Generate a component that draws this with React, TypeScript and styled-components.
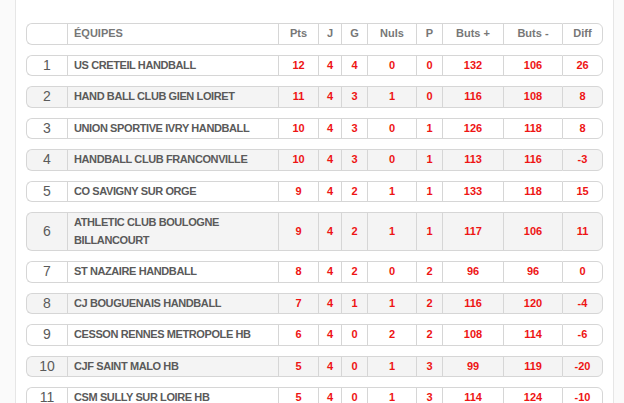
import React from "react";
import styled, { createGlobalStyle } from "styled-components";

const Global = createGlobalStyle`
  html, body { margin: 0; padding: 0; background: #fafafa; overflow: hidden; }
  body { font-family: "Liberation Sans", Arial, sans-serif; }
`;

const Panel = styled.div`
  margin-left: 15px;
  width: 577px;
  min-height: 403px;
  box-sizing: content-box;
  padding: 13px 10px 0 10px;
  background: #ffffff;
  border-left: 1px solid #e6e6e6;
  border-right: 1px solid #e6e6e6;
`;

const Table = styled.table`
  width: 577px;
  border-collapse: separate;
  border-spacing: 0 10px;
  table-layout: fixed;
`;

const Cell = styled.td<{ $alt?: boolean; $align?: string; $head?: boolean; $kind?: string }>`
  background: ${(p) => (p.$alt ? "#f4f4f4" : "#ffffff")};
  border-top: 1px solid #d6d6d6;
  border-bottom: 1px solid #d6d6d6;
  border-left: 1px solid #d6d6d6;
  padding: 1px 0;
  line-height: 17.5px;
  font-size: ${(p) => (p.$kind === "rank" ? "14px" : "11px")};
  font-weight: ${(p) => (p.$kind === "rank" ? "normal" : "bold")};
  letter-spacing: ${(p) => (p.$kind === "team" ? "-0.4px" : "0")};
  color: ${(p) =>
    p.$head ? "#777777" : p.$kind === "num" ? "#ee1414" : "#5a5a5a"};
  text-align: ${(p) => p.$align || "center"};
  padding-left: ${(p) => (p.$align === "left" ? "6px" : "0")};
  vertical-align: middle;

  &:first-child {
    border-radius: 6px 0 0 6px;
  }
  &:last-child {
    border-right: 1px solid #d6d6d6;
    border-radius: 0 6px 6px 0;
  }
`;

const widths = [41, 211, 40, 23, 26, 49, 26, 61, 59, 41];
const heads = ["", "ÉQUIPES", "Pts", "J", "G", "Nuls", "P", "Buts +", "Buts -", "Diff"];

type Row = [number, string, number, number, number, number, number, number, number, number];

const rows: Row[] = [
  [1, "US CRETEIL HANDBALL", 12, 4, 4, 0, 0, 132, 106, 26],
  [2, "HAND BALL CLUB GIEN LOIRET", 11, 4, 3, 1, 0, 116, 108, 8],
  [3, "UNION SPORTIVE IVRY HANDBALL", 10, 4, 3, 0, 1, 126, 118, 8],
  [4, "HANDBALL CLUB FRANCONVILLE", 10, 4, 3, 0, 1, 113, 116, -3],
  [5, "CO SAVIGNY SUR ORGE", 9, 4, 2, 1, 1, 133, 118, 15],
  [6, "ATHLETIC CLUB BOULOGNE BILLANCOURT", 9, 4, 2, 1, 1, 117, 106, 11],
  [7, "ST NAZAIRE HANDBALL", 8, 4, 2, 0, 2, 96, 96, 0],
  [8, "CJ BOUGUENAIS HANDBALL", 7, 4, 1, 1, 2, 116, 120, -4],
  [9, "CESSON RENNES METROPOLE HB", 6, 4, 0, 2, 2, 108, 114, -6],
  [10, "CJF SAINT MALO HB", 5, 4, 0, 1, 3, 99, 119, -20],
  [11, "CSM SULLY SUR LOIRE HB", 5, 4, 0, 1, 3, 114, 124, -10],
];

export default function App() {
  return (
    <>
      <Global />
      <Panel>
        <Table>
          <colgroup>
            {widths.map((w, i) => (
              <col key={i} style={{ width: w }} />
            ))}
          </colgroup>
          <thead>
            <tr>
              {heads.map((h, i) => (
                <Cell as="th" key={i} $head $align={i === 1 ? "left" : "center"}>
                  {h}
                </Cell>
              ))}
            </tr>
          </thead>
          <tbody>
            {rows.map((r, ri) => (
              <tr key={ri}>
                {r.map((v, i) => (
                  <Cell
                    key={i}
                    $alt={ri % 2 === 1}
                    $align={i === 1 ? "left" : "center"}
                    $kind={i === 0 ? "rank" : i === 1 ? "team" : "num"}
                  >
                    {v}
                  </Cell>
                ))}
              </tr>
            ))}
          </tbody>
        </Table>
      </Panel>
    </>
  );
}
